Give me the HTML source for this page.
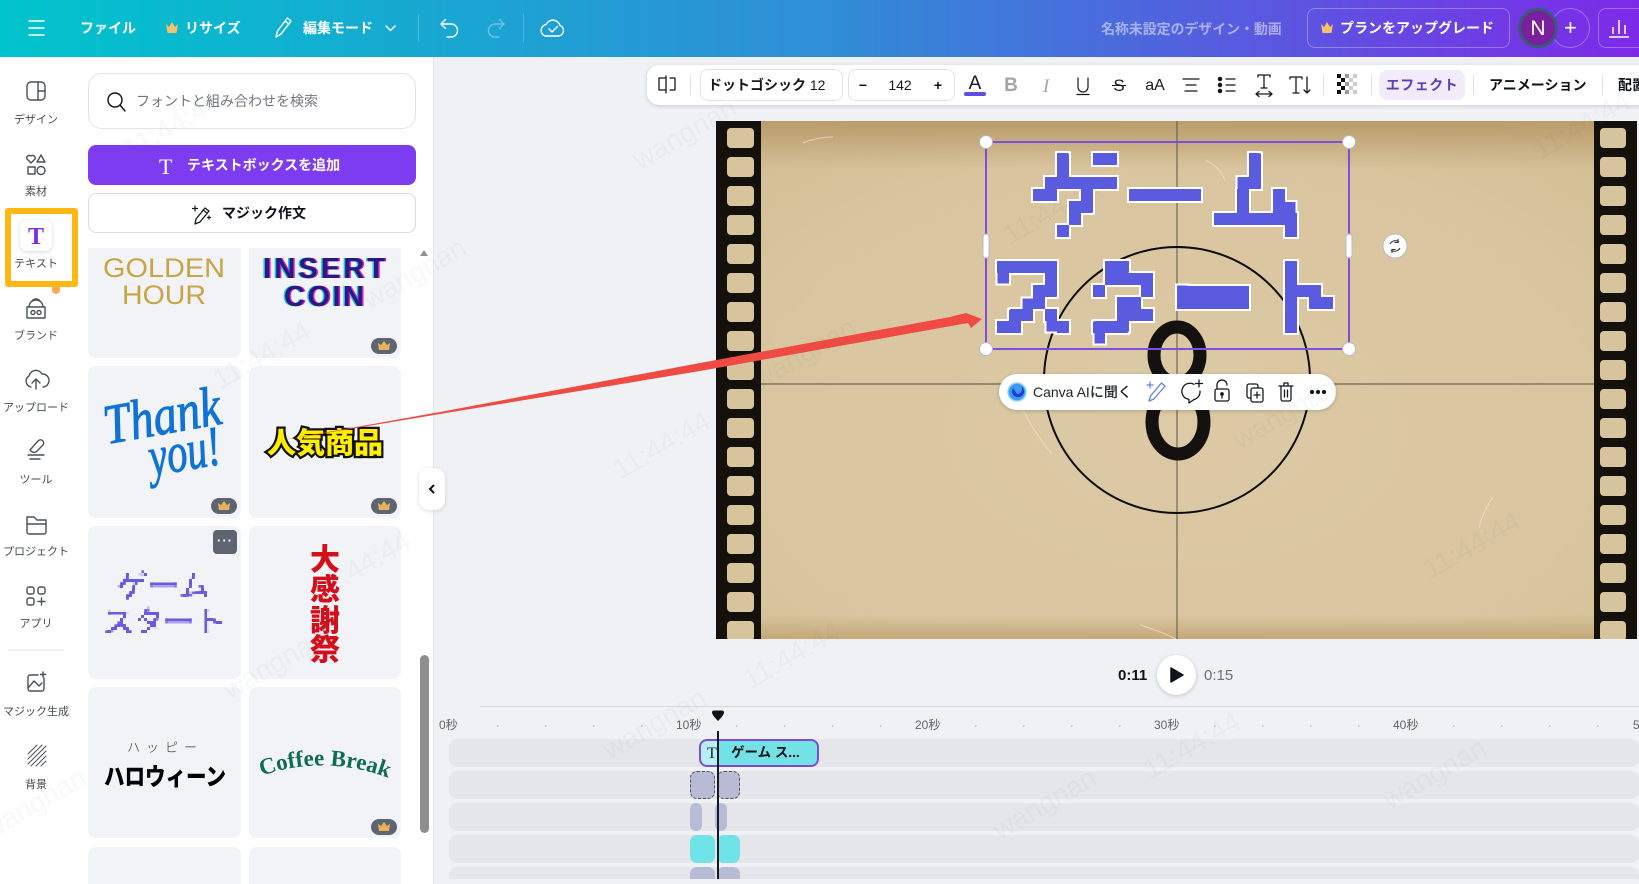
<!DOCTYPE html>
<html lang="ja"><head><meta charset="utf-8"><title>Canva</title>
<style>
*{box-sizing:border-box}
html,body{margin:0;padding:0;width:1639px;height:884px;overflow:hidden}
body{background:#eff1f5;font-family:"Liberation Sans","Noto Sans CJK JP",sans-serif;color:#0e1318}
#root{position:relative;width:1639px;height:884px;overflow:hidden;background:#eff1f5}
.a{position:absolute}
.t{position:absolute;white-space:nowrap;line-height:1}
.c{transform:translateX(-50%)}
svg{position:absolute;overflow:visible}
.h{color:#fff;font-weight:700;font-size:14px;top:21px}
.r{font-size:11px;color:#444a52;transform:translateX(-50%);left:36px}
.card{position:absolute;background:#f1f3f6;border-radius:8px;width:153px}
.c1{left:88px;width:153px}.c2{left:249px;width:152px}
.badge{position:absolute;width:26px;height:16px;border-radius:8px;background:#5f6570}
.tk{position:absolute;left:449px;width:1190px;height:28px;background:#e4e6ea;border-radius:8px}
.clip{position:absolute;border-radius:7px}
.ic{fill:none;stroke:#4a5058;stroke-width:1.4;stroke-linecap:round;stroke-linejoin:round}
.tb{fill:none;stroke:#15181c;stroke-width:1.3;stroke-linecap:round;stroke-linejoin:round}
.dv{position:absolute;width:1px;height:20px;top:75px;background:#dfe1e5}
.hd{position:absolute;width:1px;height:28px;top:14px;background:rgba(255,255,255,.2)}
</style></head><body><div id="root">

<!-- header -->
<div class="a" style="left:0;top:0;width:1639px;height:57px;background:linear-gradient(90deg,#00c4cc 0%,#2f8ed6 50%,#7d2ae8 100%)"></div>
<svg style="left:0;top:0" width="1639" height="57" fill="none" stroke="#fff" stroke-width="1.4" stroke-linecap="round" stroke-linejoin="round">
<path d="M29 21h15M29 28h15M29 35h15" stroke-width="1.6"/>
<path d="M166 24l3 3 3-5 3 5 3-3-1.500 9h-9z" fill="#f3c26b" stroke="none"/>
<path d="M276 37l1.500-6 10-13 3.500 3-10 13zM285 21l4 3" />
<path d="M386 26l4.500 4.500 4.500-4.500"/>
<path d="M441 24h10a6.500 6.500 0 0 1 0 13h-4M441 24l4.500-4.500M441 24l4.500 4.500" />
<path d="M504 24h-9a6.500 6.500 0 0 0 0 13h4M504 24l-4.500-4.500M504 24l-4.500 4.500" opacity=".35"/>
<path d="M559 36a5.500 5.500 0 0 0 1-10.500 7.500 7.500 0 0 0-14-1 6 6 0 0 0-1 11.500 z" /><path d="M549 29l3 3 5.500-5.500" />
<path d="M1321 24l3 3 3-5 3 5 3-3-1.500 9h-9z" fill="#f3c26b" stroke="none"/>
</svg>
<div class="t h" style="left:80px">ファイル</div>
<div class="t h" style="left:185px">リサイズ</div>
<div class="t h" style="left:303px">編集モード</div>
<div class="hd" style="left:418px"></div><div class="hd" style="left:523px"></div>
<div class="t" style="left:1101px;top:22px;font-size:14px;font-weight:700;color:rgba(255,255,255,.5);letter-spacing:-.1px">名称未設定のデザイン・動画</div>
<div class="a" style="left:1307px;top:8px;width:203px;height:40px;border:1px solid rgba(255,255,255,.3);border-radius:8px"></div>
<div class="t h" style="left:1340px">プランをアップグレード</div>
<div class="a" style="left:1550px;top:8px;width:40px;height:40px;border:1px solid rgba(255,255,255,.3);border-radius:50%"></div>
<div class="t" style="left:1564px;top:17px;font-size:22px;color:#fff">+</div>
<div class="a" style="left:1518px;top:8px;width:40px;height:40px;border-radius:50%;background:#7a1f9e;border:3px solid #3b5a7a"></div>
<div class="t c" style="left:1538px;top:18px;font-size:21px;color:#fff">N</div>
<div class="a" style="left:1598px;top:8px;width:50px;height:40px;border:1px solid rgba(255,255,255,.3);border-radius:8px"></div>
<svg style="left:1598px;top:8px" width="41" height="40" fill="none" stroke="#fff" stroke-width="1.5"><path d="M11 29h20M15 26v-7M21 26V12M27 26v-9"/></svg>

<!-- left rail + panel -->
<div class="a" style="left:0;top:57px;width:434px;height:827px;background:#fff;border-right:1px solid #e3e5e9"></div>

<svg style="left:0;top:57px" width="78" height="827" class="ic">
<rect x="27" y="25" width="18" height="18" rx="4"/><path d="M38 25v18M38 34h7"/>
<path d="M31 106l-4-4a2.600 2.600 0 0 1 4-3 2.600 2.600 0 0 1 4 3zM41 98l4 7h-8zM28 110h7v7h-7z"/><circle cx="41" cy="113.500" r="4"/>
<path d="M27 250h18v11H27zM29 250a7 7 0 0 1 14 0M32 244a5 5 0 0 1 8 0"/><circle cx="33" cy="255.500" r="2"/><circle cx="39" cy="255.500" r="2"/>
<path d="M31 330a6 6 0 0 1-2-11 7 7 0 0 1 13-2 6 6 0 0 1 1 13M36 332v-9M32 326l4-4 4 4"/>
<path d="M28 398h16M30 402h10M30 393l8-9a3 3 0 0 1 5 4l-7 7a5 5 0 0 1-6-2z"/>
<path d="M27 460h7l3 3h9v12a2 2 0 0 1-2 2H29a2 2 0 0 1-2-2z"/><path d="M27 467h19"/>
<rect x="27" y="530" width="7" height="7" rx="2"/><rect x="38" y="530" width="7" height="7" rx="2"/><rect x="27" y="541" width="7" height="7" rx="2"/><path d="M41.500 541v7M38 544.500h7"/>
<path d="M44 621v11a2 2 0 0 1-2 2H30a2 2 0 0 1-2-2v-12a2 2 0 0 1 2-2h8M28 631l6-7 5 5 3-3M43 615v5M40.500 617.500h5"/>
<path d="M28 697l9-9M28 702l14-14M28 707l18-18M31 709l15-15M36 709l10-10M41 709l5-5" stroke-width="1"/>
<path d="M8 593h56" stroke="#dfe1e5" stroke-width="1"/>
</svg>
<div class="t r" style="top:115px">デザイン</div>
<div class="t r" style="top:187px">素材</div>
<div class="a" style="left:5px;top:208px;width:73px;height:79px;border:6px solid #fdb813;border-radius:3px"></div>
<div class="a" style="left:20px;top:220px;width:32px;height:31px;border-radius:7px;background:#fff;box-shadow:0 1px 4px rgba(60,60,90,.2)"></div>
<div class="t c" style="left:36px;top:224px;font:700 24px 'Liberation Serif',serif;color:#7d2ae8">T</div>
<div class="t r" style="top:259px">テキスト</div>
<div class="a" style="left:52px;top:287px;width:8px;height:7px;border-radius:0 0 4px 4px;background:#f6a94d"></div>
<div class="t r" style="top:331px">ブランド</div>
<div class="t r" style="top:403px">アップロード</div>
<div class="t r" style="top:475px">ツール</div>
<div class="t r" style="top:547px">プロジェクト</div>
<div class="t r" style="top:619px">アプリ</div>
<div class="t r" style="top:707px">マジック生成</div>
<div class="t r" style="top:780px">背景</div>

<div class="a" style="left:88px;top:73px;width:328px;height:56px;border:1px solid #e1e3ea;border-radius:14px"></div>
<svg style="left:104px;top:90px" width="24" height="24" class="ic"><circle cx="11" cy="10" r="7" style="stroke:#111"/><path d="M16 15l5 6" style="stroke:#111"/></svg>
<div class="t" style="left:136px;top:94px;font-size:14px;color:#71767d">フォントと組み合わせを検索</div>
<div class="a" style="left:88px;top:145px;width:328px;height:40px;background:#7d3cf0;border-radius:8px"></div>
<div class="t" style="left:159px;top:154px;font:22px 'Liberation Serif',serif;color:#fff">T</div>
<div class="t" style="left:187px;top:158px;font-size:14px;font-weight:700;color:#fff">テキストボックスを追加</div>
<div class="a" style="left:88px;top:193px;width:328px;height:40px;border:1px solid #d8dbe0;border-radius:8px"></div>
<svg style="left:190px;top:202px" width="24" height="24" class="tb"><path d="M5 22l1-5 9-11 4 3-9 11zM13 8l4 3"/><path d="M5 4v5M2.500 6.500h5M19 14v3M17.500 15.500h3" stroke-width="1.200"/></svg>
<div class="t" style="left:222px;top:206px;font-size:14px;font-weight:700">マジック作文</div>

<!-- cards -->
<div class="card c1" style="top:238px;height:120px;clip-path:inset(10px 0 0 0)"></div>
<div class="card c2" style="top:238px;height:120px;clip-path:inset(10px 0 0 0)"></div>
<div class="card c1" style="top:366px;height:152px"></div>
<div class="card c2" style="top:366px;height:152px"></div>
<div class="card c1" style="top:526px;height:153px"></div>
<div class="card c2" style="top:526px;height:153px"></div>
<div class="card c1" style="top:687px;height:151px"></div>
<div class="card c2" style="top:687px;height:151px"></div>
<div class="card c1" style="top:847px;height:60px"></div>
<div class="card c2" style="top:847px;height:60px"></div>

<svg style="left:0;top:0" width="440" height="884">
<defs>
<filter id="pxs" filterUnits="userSpaceOnUse" x="90" y="540" width="150" height="110" primitiveUnits="userSpaceOnUse">
<feFlood x="91" y="541" width="1" height="1"/><feComposite x="90" y="540" width="3" height="3"/><feTile result="a"/>
<feComposite in="SourceGraphic" in2="a" operator="in"/><feMorphology operator="dilate" radius="1"/>
</filter>
<path id="arc" d="M264 775Q324 755 386 777"/>
<clipPath id="rowclip"><rect x="88" y="248" width="320" height="120"/></clipPath>
</defs>
<g clip-path="url(#rowclip)">
<g font-family="'Liberation Sans',sans-serif" fill="#c7a544" font-size="27" text-anchor="middle">
<text x="164" y="277" textLength="122" lengthAdjust="spacingAndGlyphs">GOLDEN</text>
<text x="164" y="304" textLength="84" lengthAdjust="spacingAndGlyphs">HOUR</text></g>
<g font-family="'Liberation Sans',sans-serif" font-weight="700" font-size="29" text-anchor="middle">
<g fill="#19c7e6" transform="translate(-1.500 0)"><text x="324" y="278" textLength="122" lengthAdjust="spacing">INSERT</text><text x="324" y="306" textLength="80" lengthAdjust="spacing">COIN</text></g>
<g fill="#d21fc8" transform="translate(1.500 0)"><text x="324" y="278" textLength="122" lengthAdjust="spacing">INSERT</text><text x="324" y="306" textLength="80" lengthAdjust="spacing">COIN</text></g>
<g fill="#2a1a80"><text x="324" y="278" textLength="122" lengthAdjust="spacing">INSERT</text><text x="324" y="306" textLength="80" lengthAdjust="spacing">COIN</text></g></g>
</g>
<g font-family="'Liberation Serif',serif" font-style="italic" fill="#0f72d6" stroke="#0f72d6" stroke-width="1">
<text transform="translate(107 444) rotate(-10)" font-size="56" textLength="118" lengthAdjust="spacingAndGlyphs">Thank</text>
<text transform="translate(152 476) rotate(-10)" font-size="56" textLength="72" lengthAdjust="spacingAndGlyphs">you!</text></g>
<text x="325" y="453" text-anchor="middle" font-family="'Noto Sans CJK JP',sans-serif" font-weight="900" font-size="29" fill="#ffee00" stroke="#111" stroke-width="4.500" paint-order="stroke" textLength="116" lengthAdjust="spacingAndGlyphs">人気商品</text>
<g font-family="'Noto Sans CJK JP',sans-serif" font-weight="900" font-size="30" fill="#d40f1c" text-anchor="middle">
<text x="325" y="570">大</text><text x="325" y="600">感</text><text x="325" y="631">謝</text><text x="325" y="660">祭</text></g>
<g filter="url(#pxs)" font-family="'Noto Sans CJK JP',sans-serif" font-weight="400" fill="#6a5ae0" font-size="31">
<text x="117 148 179" y="597">ゲーム</text><text x="103 133 163 195" y="633">スタート</text></g>
<text x="165" y="752" text-anchor="middle" font-family="'Noto Sans CJK JP',sans-serif" font-weight="300" font-size="13" letter-spacing="6" fill="#333">ハッピー</text>
<text x="165" y="785" text-anchor="middle" font-family="'Noto Sans CJK JP',sans-serif" font-weight="900" font-size="24" fill="#000" textLength="122" lengthAdjust="spacingAndGlyphs">ハロウィーン</text>
<text font-family="'Liberation Serif',serif" font-weight="700" font-size="23" fill="#0f6e50"><textPath href="#arc" startOffset="50%" text-anchor="middle">Coffee Break</textPath></text>
<path d="M420 256l4-6 4 6z" fill="#8d9096"/>
</svg>

<div class="badge" style="left:371px;top:338px"></div>
<div class="badge" style="left:211px;top:498px"></div>
<div class="badge" style="left:371px;top:498px"></div>
<div class="badge" style="left:371px;top:819px"></div>
<svg style="left:0;top:0" width="400" height="884" fill="#e8b25a">
<path d="M378 343l3 2 3-4 3 4 3-2-1 7h-10z"/>
<path d="M218 503l3 2 3-4 3 4 3-2-1 7h-10z"/>
<path d="M378 503l3 2 3-4 3 4 3-2-1 7h-10z"/>
<path d="M378 824l3 2 3-4 3 4 3-2-1 7h-10z"/>
</svg>
<div class="a" style="left:213px;top:530px;width:24px;height:24px;background:#5f6570;border-radius:4px"></div>
<div class="t c" style="left:225px;top:534px;font-size:13px;font-weight:700;color:#fff;letter-spacing:1px">···</div>

<div class="a" style="left:420px;top:655px;width:9px;height:178px;background:#8e8e8e;border-radius:5px"></div>

<!-- canvas -->
<div class="a" style="left:716px;top:121px;width:921px;height:518px;background:radial-gradient(ellipse 75% 80% at 50% 60%,#dcc9a5 0%,#d9c6a0 60%,#d2bc92 100%),#d6c197;overflow:hidden">
<div class="a" style="left:0;top:0;width:45px;height:518px;background:#14110d"></div>
<div class="a" style="right:0;top:0;width:43px;height:518px;background:#14110d"></div>
<div class="a" style="left:45px;top:0;width:833px;height:48px;background:linear-gradient(#b99c6a,#bb9f6e00)"></div>
<div class="a" style="left:45px;bottom:0;width:833px;height:24px;background:linear-gradient(#c4a87800,#c4a878)"></div>
<svg style="left:0;top:0" width="921" height="518">
<defs><pattern id="hole" patternUnits="userSpaceOnUse" x="0" y="7" width="921" height="29"><rect x="11" y="0" width="27" height="20" rx="4" fill="#d8c49c"/><rect x="884" y="0" width="26" height="20" rx="4" fill="#d8c49c"/></pattern></defs>
<rect x="0" y="0" width="921" height="518" fill="url(#hole)"/>
</svg>
</div>

<svg style="left:0;top:0" width="1639" height="884">
<path d="M1177 121v518" stroke="#5b5346" stroke-width="1"/>
<path d="M761 384h833" stroke="#7f7560" stroke-width="1.500"/>
<circle cx="1177" cy="380" r="133" fill="none" stroke="#0d0c0a" stroke-width="2"/>
<g fill="none" stroke="#141210" stroke-width="13"><ellipse cx="1177" cy="355" rx="23" ry="28"/><ellipse cx="1178" cy="422" rx="26" ry="32"/></g>
<g fill="none" stroke="#efe6d2" stroke-width="1" opacity=".7"><path d="M803 143q14-6 30-6M1023 410q12 24 29 44M1493 497q-10 14-14 31M1140 625q20 6 36 14M1205 160q14 6 20 20"/></g>
</svg>

<!-- pixel headline: real text, pixelated by an SVG filter, outlined with CSS shadows -->
<svg style="left:0;top:0;filter:drop-shadow(2px 0 0 #fff) drop-shadow(-2px 0 0 #fff) drop-shadow(0 2px 0 #fff) drop-shadow(0 -2px 0 #fff)" width="1639" height="884">
<defs>
<filter id="px" filterUnits="userSpaceOnUse" x="985" y="141" width="365" height="209" primitiveUnits="userSpaceOnUse" color-interpolation-filters="sRGB">
<feFlood x="990" y="146" width="2" height="2"/><feComposite x="985" y="141" width="12" height="12"/><feTile result="a"/>
<feComposite in="SourceGraphic" in2="a" operator="in"/><feMorphology operator="dilate" radius="5"/>
<feComponentTransfer><feFuncA type="discrete" tableValues="0 1 1 1"/></feComponentTransfer>
</filter>
</defs>
<g filter="url(#px)" font-family="'Noto Sans CJK JP',sans-serif" font-weight="700" font-size="92" fill="#5b5be0">
<text x="1030 1122 1213" y="230">ゲーム</text>
<text x="986 1076 1167 1258" y="333">スタート</text>
</g>
</svg>

<svg style="left:0;top:0" width="1639" height="884">
<rect x="986" y="142" width="363" height="207" fill="none" stroke="#7d4fe0" stroke-width="2"/>
<g fill="#fff" stroke="#b9b9c4" stroke-width="1">
<circle cx="986" cy="142" r="6.500"/><circle cx="1349" cy="142" r="6.500"/><circle cx="986" cy="349" r="6.500"/><circle cx="1349" cy="349" r="6.500"/>
<rect x="983" y="234" width="6" height="24" rx="3"/><rect x="1346" y="234" width="6" height="24" rx="3"/>
<circle cx="1395" cy="246" r="12"/></g>
<path d="M1390 244a6 6 0 0 1 9-2M1400 248a6 6 0 0 1-9 2M1398 239v3.500h-3.500M1392 253v-3.500h3.500" fill="none" stroke="#333" stroke-width="1.100"/>
</svg>

<!-- AI toolbar -->
<div class="a" style="left:999px;top:374px;width:337px;height:36px;background:#fff;border-radius:18px;box-shadow:0 1px 4px rgba(0,0,0,.2)"></div>
<svg style="left:999px;top:374px" width="337" height="36" class="tb">
<circle cx="18" cy="18" r="9" fill="#3a9cf0" stroke="#8fd8ee" stroke-width="1.500"/><path d="M14 14a6 6 0 1 0 8-2 5 5 0 0 1-4 8z" fill="#2438d8" stroke="none"/>
<path d="M150 27l1.500-5 11-13 3.500 3-11 13z" style="stroke:#5f7fe0"/><path d="M151 8v6M148 11h6" style="stroke:#5f7fe0" stroke-width="1.200"/>
<g transform="translate(3 0)"><path d="M192 10.300A8 8 0 0 0 184 24.500L187 25.200V29L192 25.500A8 8 0 0 0 198 17"/><path d="M197 6v7M193.500 9.500h7"/></g>
<rect x="216" y="15" width="14" height="12" rx="2"/><path d="M218 15v-4a5 5 0 0 1 10 0"/><circle cx="223" cy="20" r="1.200" fill="#111"/><path d="M223 21v3"/>
<rect x="248" y="10" width="11" height="14" rx="2"/><rect x="252" y="14" width="12" height="14" rx="2" fill="#fff"/><path d="M258 18v6M255 21h6"/>
<path d="M280 12h14M285 12V9h4v3M282 12v13a2 2 0 0 0 2 2h6a2 2 0 0 0 2-2V12M285.500 16v7M288.500 16v7"/>
<circle cx="313" cy="18" r="1.500" fill="#111"/><circle cx="319" cy="18" r="1.500" fill="#111"/><circle cx="325" cy="18" r="1.500" fill="#111"/>
</svg>
<div class="t" style="left:1033px;top:385px;font-size:14px;font-weight:500;color:#20242a">Canva AIに聞く</div>

<!-- top text toolbar -->
<div class="a" style="left:647px;top:65px;width:1040px;height:40px;background:#fff;border-radius:12px;box-shadow:0 1px 4px rgba(30,40,60,.18)"></div>
<div class="a" style="left:700px;top:69px;width:143px;height:32px;border:1px solid #e1e3e8;border-radius:8px"></div>
<div class="t" style="left:708px;top:78px;font-size:14px;font-weight:700;color:#15181c">ドットゴシック <span style="font-weight:500">12</span></div>
<div class="a" style="left:848px;top:69px;width:107px;height:32px;border:1px solid #e1e3e8;border-radius:8px"></div>
<div class="t c" style="left:863px;top:78px;font-size:14px;font-weight:700">−</div>
<div class="t c" style="left:900px;top:78px;font-size:14px;color:#15181c">142</div>
<div class="t c" style="left:938px;top:78px;font-size:14px;font-weight:700">+</div>
<div class="t c" style="left:975px;top:74px;font-size:19px;color:#15181c">A</div>
<div class="a" style="left:964px;top:92px;width:22px;height:4px;border-radius:2px;background:#5b50e0"></div>
<div class="t c" style="left:1011px;top:76px;font-size:19px;font-weight:700;color:#a2a5aa">B</div>
<div class="t c" style="left:1046px;top:76px;font:italic 19px 'Liberation Serif',serif;color:#a2a5aa">I</div>
<svg style="left:1070px;top:70px" width="30" height="30" class="tb"><path d="M8 8v9a5 5 0 0 0 10 0V8M7 24.500h12" stroke-width="1.200"/></svg>
<div class="t c" style="left:1119px;top:77px;font-size:17px;color:#15181c">S</div>
<div class="a" style="left:1112px;top:85px;width:14px;height:1.200px;background:#15181c"></div>
<div class="t c" style="left:1155px;top:78px;font-size:16px;color:#15181c">aA</div>
<svg style="left:1170px;top:65px" width="250" height="40" class="tb">
<path d="M13 14h16M16 20h10M15 26h12"/>
<circle cx="50" cy="14" r="1.600" fill="#111"/><circle cx="50" cy="20" r="1.600" fill="#111"/><circle cx="50" cy="26" r="1.600" fill="#111"/><path d="M56 14h9M56 20h9M56 26h9"/>
<path d="M88 12v-2h12v2M94 10v13M91 23h6M86 29h16M86 29l3-2.500M86 29l3 2.500M102 29l-3-2.500M102 29l-3 2.500"/>
<path d="M120 14v-2h12v2M126 12v16M123 28h6M137 12v16M134 25l3 3 3-3"/>
<g stroke="none"><g fill="#111"><rect x="167" y="9" width="4" height="4"/><rect x="167" y="17" width="4" height="4"/><rect x="167" y="25" width="4" height="4"/><rect x="171" y="13" width="4" height="4"/><rect x="171" y="21" width="4" height="4"/></g><g fill="#999"><rect x="175" y="9" width="4" height="4"/><rect x="175" y="17" width="4" height="4"/><rect x="175" y="25" width="4" height="4"/></g><g fill="#ccc"><rect x="179" y="13" width="4" height="4"/><rect x="179" y="21" width="4" height="4"/><rect x="183" y="9" width="4" height="4"/><rect x="183" y="17" width="4" height="4"/><rect x="183" y="25" width="4" height="4"/></g></g>
</svg>
<svg style="left:655px;top:72px" width="24" height="24" class="tb"><path d="M11 4v17M11 6H4v12h7M15 6h5v12h-5"/></svg>
<div class="dv" style="left:690px"></div>
<div class="dv" style="left:1323px"></div>
<div class="dv" style="left:1371px"></div>
<div class="a" style="left:1379px;top:70px;width:86px;height:30px;background:#f1ebfc;border-radius:8px"></div>
<div class="t c" style="left:1422px;top:78px;font-size:14px;font-weight:700;color:#5f3fb5;letter-spacing:.5px">エフェクト</div>
<div class="dv" style="left:1473px"></div>
<div class="t" style="left:1489px;top:78px;font-size:14px;font-weight:700">アニメーション</div>
<div class="dv" style="left:1602px"></div>
<div class="t" style="left:1618px;top:78px;font-size:14px;font-weight:700">配置</div>

<!-- collapse handle -->
<div class="a" style="left:419px;top:468px;width:26px;height:42px;background:#fff;border-radius:10px;box-shadow:0 1px 4px rgba(0,0,0,.15)"></div>
<svg style="left:425px;top:482px" width="14" height="14" fill="none" stroke="#111" stroke-width="2" stroke-linecap="round"><path d="M8.500 3.500L5 7l3.500 3.500"/></svg>

<!-- playback -->
<div class="t" style="left:1118px;top:668px;font-size:15px;font-weight:700">0:11</div>
<div class="a" style="left:1157px;top:655px;width:39px;height:40px;background:#fff;border-radius:50%;box-shadow:0 1px 4px rgba(0,0,0,.2)"></div>
<svg style="left:1157px;top:655px" width="39" height="40"><path d="M14 13l12 7-12 7z" fill="#0e1318" stroke="#0e1318" stroke-linejoin="round" stroke-width="1.500"/></svg>
<div class="t" style="left:1204px;top:668px;font-size:15px;color:#6b7078">0:15</div>

<!-- timeline -->
<div class="a" style="left:480px;top:706px;width:1159px;height:1px;background:#d6d9de"></div>
<div class="t" style="left:439px;top:719px;font-size:12px;color:#5f646b">0秒</div>
<div class="t" style="left:676px;top:719px;font-size:12px;color:#5f646b">10秒</div>
<div class="t" style="left:915px;top:719px;font-size:12px;color:#5f646b">20秒</div>
<div class="t" style="left:1154px;top:719px;font-size:12px;color:#5f646b">30秒</div>
<div class="t" style="left:1393px;top:719px;font-size:12px;color:#5f646b">40秒</div>
<div class="t" style="left:1633px;top:719px;font-size:12px;color:#5f646b">50秒</div>
<div class="a" style="left:497px;top:725px;width:160px;height:2px;background:repeating-linear-gradient(90deg,#c6c9ce 0 1.500px,transparent 1.500px 48px)"></div>
<div class="a" style="left:736px;top:725px;width:160px;height:2px;background:repeating-linear-gradient(90deg,#c6c9ce 0 1.500px,transparent 1.500px 48px)"></div>
<div class="a" style="left:975px;top:725px;width:160px;height:2px;background:repeating-linear-gradient(90deg,#c6c9ce 0 1.500px,transparent 1.500px 48px)"></div>
<div class="a" style="left:1214px;top:725px;width:160px;height:2px;background:repeating-linear-gradient(90deg,#c6c9ce 0 1.500px,transparent 1.500px 48px)"></div>
<div class="a" style="left:1453px;top:725px;width:160px;height:2px;background:repeating-linear-gradient(90deg,#c6c9ce 0 1.500px,transparent 1.500px 48px)"></div>
<div class="tk" style="top:739px"></div>
<div class="tk" style="top:771px"></div>
<div class="tk" style="top:803px"></div>
<div class="tk" style="top:835px"></div>
<div class="tk" style="top:867px;height:12px;border-radius:8px 8px 0 0"></div>
<div class="clip" style="left:699px;top:739px;width:120px;height:28px;background:linear-gradient(90deg,#b6f0f6 0 17px,#72e2e6 17px);border:2.500px solid #7d4fd0;border-radius:8px"></div>
<div class="t" style="left:707px;top:745px;font:16px 'Liberation Serif',serif;color:#222">T</div>
<div class="t" style="left:731px;top:746px;font-size:13.500px;font-weight:700;color:#0e1318">ゲーム ス...</div>
<div class="clip" style="left:690px;top:771px;width:25px;height:28px;background:#b8bbd6;border:1px dashed #555"></div>
<div class="clip" style="left:717px;top:771px;width:23px;height:28px;background:#b8bbd6;border:1px dashed #555"></div>
<div class="clip" style="left:690px;top:803px;width:12px;height:28px;background:#b8bbd6"></div>
<div class="clip" style="left:715px;top:803px;width:12px;height:28px;background:#b8bbd6"></div>
<div class="clip" style="left:690px;top:835px;width:25px;height:28px;background:#6fe3e8"></div>
<div class="clip" style="left:717px;top:835px;width:23px;height:28px;background:#6fe3e8"></div>
<div class="clip" style="left:690px;top:867px;width:25px;height:12px;background:#b8bbd6;border-radius:7px 7px 0 0"></div>
<div class="clip" style="left:717px;top:867px;width:23px;height:12px;background:#b8bbd6;border-radius:7px 7px 0 0"></div>
<div class="a" style="left:717px;top:731px;width:1.500px;height:148px;background:#15181c"></div>
<svg style="left:711px;top:710px" width="14" height="12"><path d="M1 2.500Q1 0.500 3.500 0.500H10.500Q13 0.500 13 2.500Q13 5 7 11Q1 5 1 2.500z" fill="#0e1318"/></svg>

<!-- red arrow -->
<svg style="left:0;top:0" width="1639" height="884">
<path d="M272 442L440 412L700 363L950 317L966 313L982 319L971 328L968 323L700 371L440 414z" fill="#ef4b43"/>
</svg>

<!-- watermark -->
<svg style="left:0;top:0;pointer-events:none" width="1639" height="884" font-family="'Liberation Sans',sans-serif" font-size="28" fill="#6a7080" fill-opacity=".05">
<text transform="translate(130 160) rotate(-30)">11:44:44</text><text transform="translate(-10 840) rotate(-30)">wangnan</text>
<text transform="translate(370 310) rotate(-30)">wangnan</text><text transform="translate(220 390) rotate(-30)">11:44:44</text>
<text transform="translate(640 170) rotate(-30)">wangnan</text><text transform="translate(620 480) rotate(-30)">11:44:44</text>
<text transform="translate(760 390) rotate(-30)">wangnan</text><text transform="translate(1010 245) rotate(-30)">11:44:44</text>
<text transform="translate(230 700) rotate(-30)">wangnan</text><text transform="translate(320 600) rotate(-30)">11:44:44</text>
<text transform="translate(610 760) rotate(-30)">wangnan</text><text transform="translate(750 690) rotate(-30)">11:44:44</text>
<text transform="translate(1240 450) rotate(-30)">wangnan</text><text transform="translate(1430 580) rotate(-30)">11:44:44</text>
<text transform="translate(1000 840) rotate(-30)">wangnan</text><text transform="translate(1150 780) rotate(-30)">11:44:44</text>
<text transform="translate(1390 810) rotate(-30)">wangnan</text><text transform="translate(1540 160) rotate(-30)">11:44:44</text>
</svg>
</div></body></html>
